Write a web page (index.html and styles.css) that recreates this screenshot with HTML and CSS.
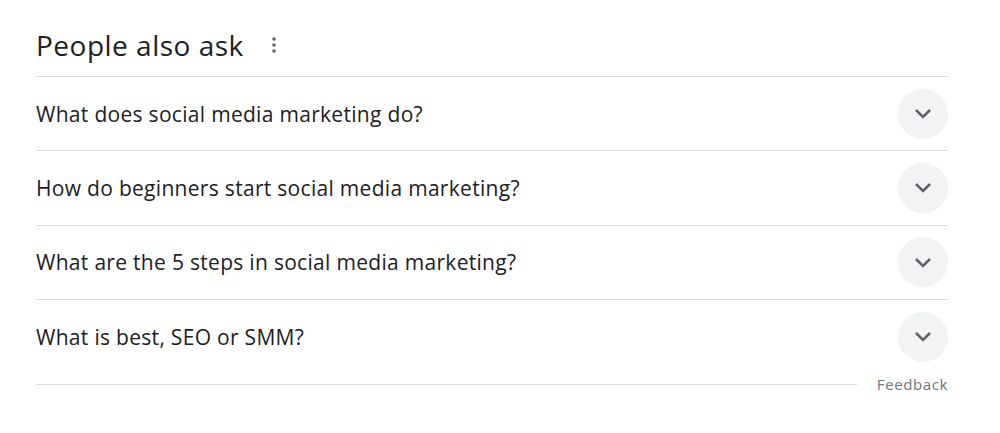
FILE: index.html
```html
<!DOCTYPE html>
<html>
<head>
<meta charset="utf-8">
<link rel="stylesheet" href="styles.css">
</head>
<body>
<div class="paa">
  <div class="header">
    <h2 class="title">People also ask</h2>
    <span class="more" aria-label="More options">
      <svg width="4" height="16" viewBox="0 0 4 16"><circle cx="2" cy="2" r="1.8" fill="#5f6368"/><circle cx="2" cy="8" r="1.8" fill="#5f6368"/><circle cx="2" cy="14" r="1.8" fill="#5f6368"/></svg>
    </span>
  </div>
  <div class="row"><span class="q">What does social media marketing do?</span><span class="btn"><svg width="18" height="11" viewBox="0 0 18 11"><path d="M2 2 L9 9 L16 2" fill="none" stroke="#5f6368" stroke-width="2.6"/></svg></span></div>
  <div class="row"><span class="q">How do beginners start social media marketing?</span><span class="btn"><svg width="18" height="11" viewBox="0 0 18 11"><path d="M2 2 L9 9 L16 2" fill="none" stroke="#5f6368" stroke-width="2.6"/></svg></span></div>
  <div class="row"><span class="q">What are the 5 steps in social media marketing?</span><span class="btn"><svg width="18" height="11" viewBox="0 0 18 11"><path d="M2 2 L9 9 L16 2" fill="none" stroke="#5f6368" stroke-width="2.6"/></svg></span></div>
  <div class="row last"><span class="q">What is best, SEO or SMM?</span><span class="btn"><svg width="18" height="11" viewBox="0 0 18 11"><path d="M2 2 L9 9 L16 2" fill="none" stroke="#5f6368" stroke-width="2.6"/></svg></span></div>
  <div class="footer">
    <div class="line"></div>
    <span class="feedback">Feedback</span>
  </div>
</div>
</body>
</html>
```
FILE: styles.css
```css
html, body {
  margin: 0;
  padding: 0;
  background: #fff;
}
body {
  font-family: "Open Sans", "Liberation Sans", Arial, sans-serif;
  color: #202124;
}
.paa {
  width: 912px;
  margin-left: 36px;
}
.header {
  height: 77px;
  display: flex;
  align-items: center;
  padding-top: 14px;
  box-sizing: border-box;
  border-bottom: 1px solid #dadce0;
  gap: 28px;
}
.title {
  margin: 0;
  font-weight: 400;
  font-size: 28px;
  line-height: 36px;
  letter-spacing: 0.5px;
}
.more {
  display: flex;
  align-items: center;
}
.row {
  height: 73.3px;
  display: flex;
  align-items: center;
  justify-content: space-between;
  border-bottom: 1px solid #dadce0;
}
.row.last {
  border-bottom: none;
}
.q {
  font-size: 21px;
  line-height: 28px;
  letter-spacing: 0.3px;
}
.btn {
  width: 50px;
  height: 50px;
  border-radius: 50%;
  background: #f1f3f4;
  display: flex;
  align-items: center;
  justify-content: center;
}
.footer {
  display: flex;
  align-items: center;
  height: 22px;
  margin-top: 0;
  gap: 20px;
}
.line {
  flex: 1;
  height: 1px;
  background: #dadce0;
}
.feedback {
  font-size: 15px;
  color: #70757a;
  line-height: 22px;
  letter-spacing: 0.6px;
}
```
